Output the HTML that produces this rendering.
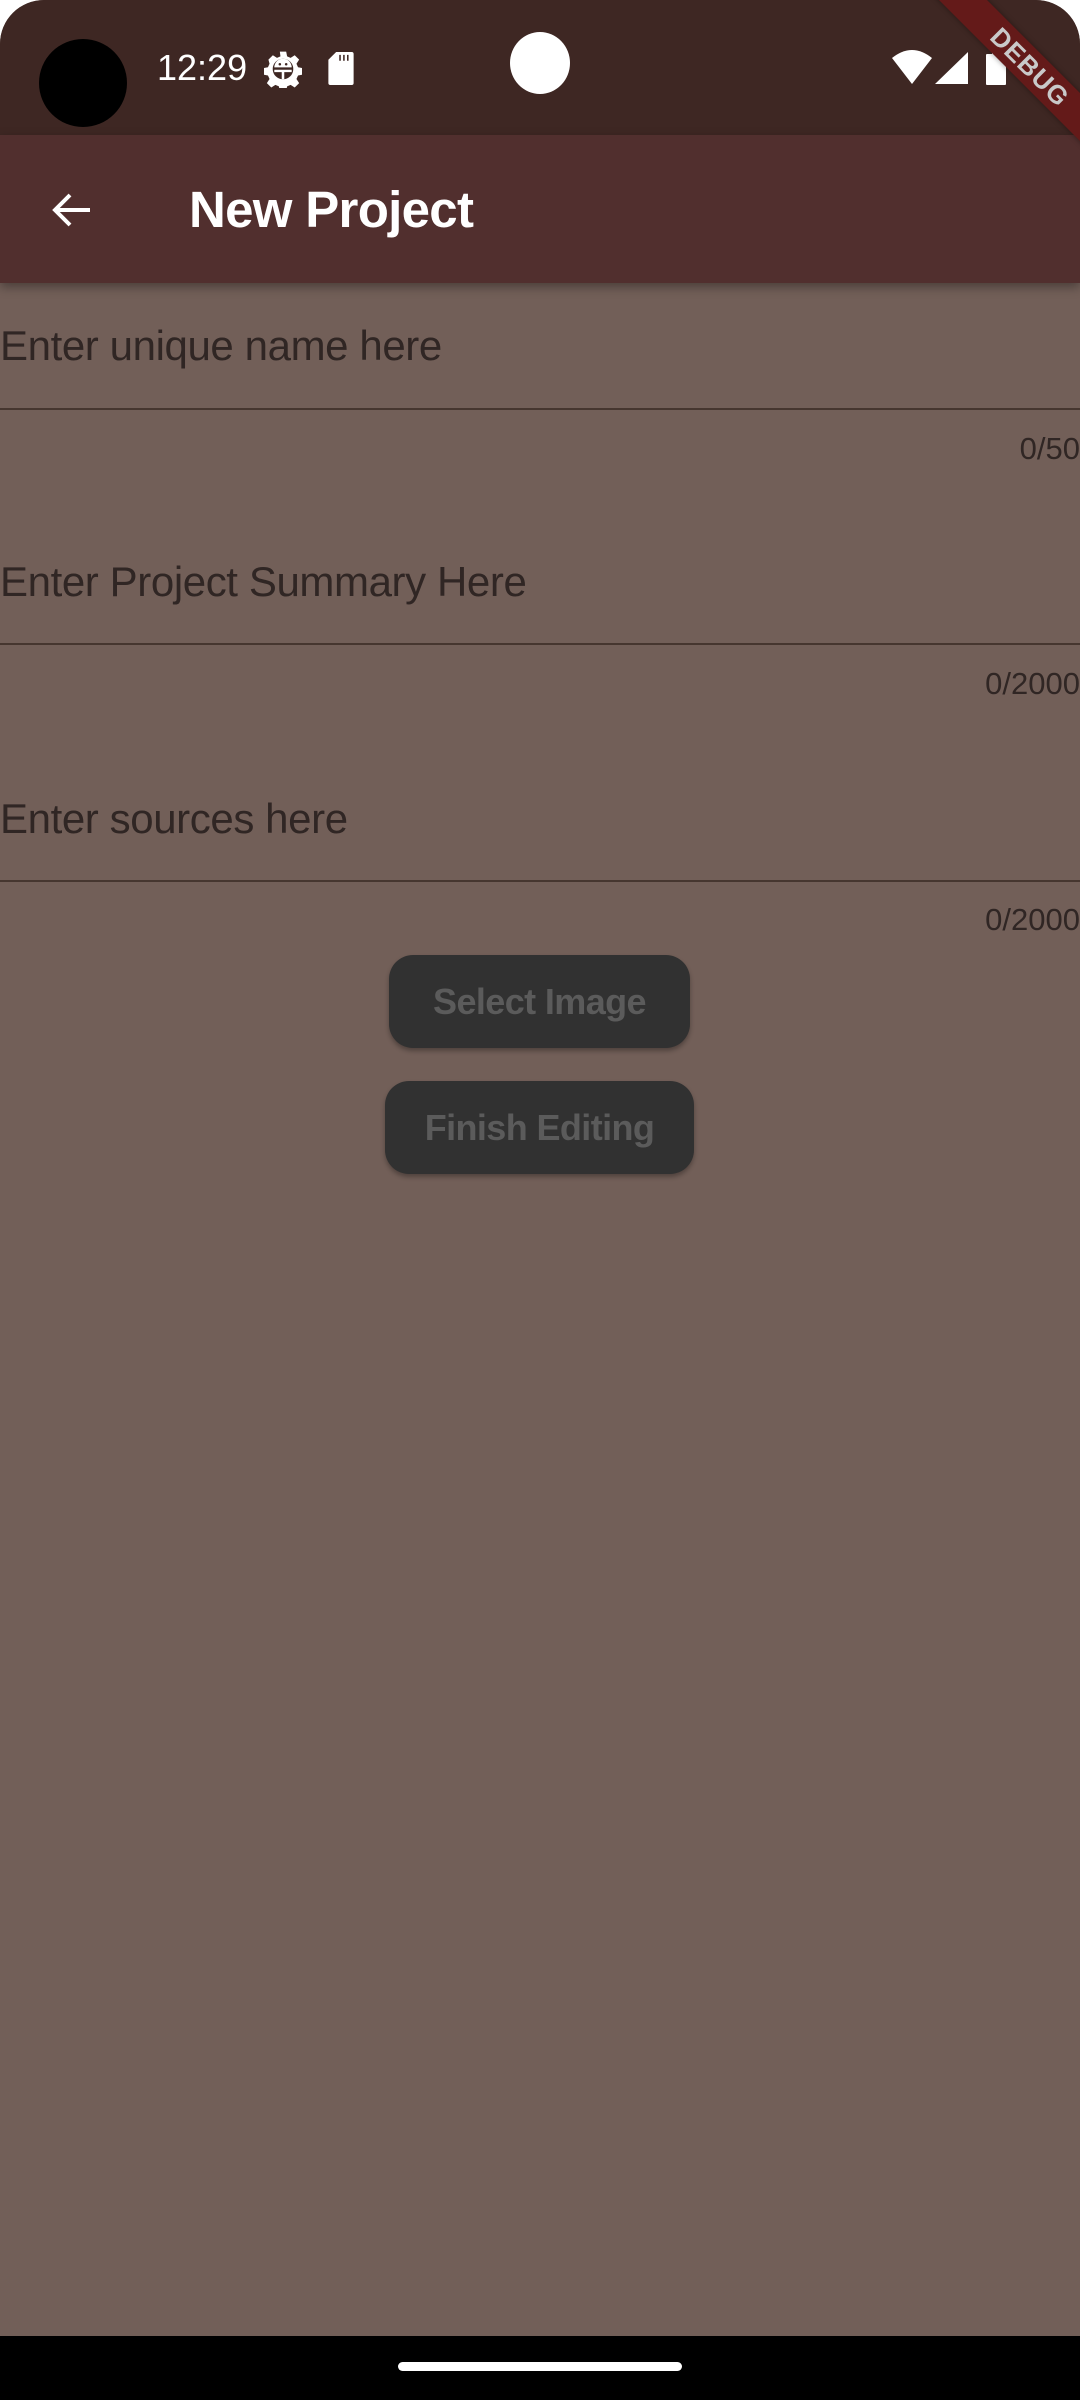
<!DOCTYPE html>
<html><head><meta charset="utf-8"><style>
html,body{margin:0;padding:0}
body{width:1080px;height:2400px;position:relative;overflow:hidden;background:#fff;font-family:"Liberation Sans",sans-serif}
.screen{position:absolute;left:0;top:0;width:1080px;height:2400px;border-radius:44px 44px 0 0;overflow:hidden;background:#725f58}
.status{position:absolute;left:0;top:0;width:1080px;height:135px;background:#3e2723}
.appbar{position:absolute;left:0;top:135px;width:1080px;height:148px;background:#512f2e;box-shadow:0 4px 10px rgba(0,0,0,.35)}
.t{position:absolute;white-space:nowrap}
.hint{font-size:42px;color:#302624;left:0;letter-spacing:-0.4px}
.line{position:absolute;left:0;width:1080px;height:2px;background:#46362f}
.cnt{font-size:31px;color:#302624;right:0}
.btn{position:absolute;background:#313131;border-radius:24px;color:#5b5b5b;font-weight:bold;font-size:36px;text-align:center;box-shadow:0 3px 5px rgba(0,0,0,.3);letter-spacing:-0.6px}
.nav{position:absolute;left:0;top:2336px;width:1080px;height:64px;background:#000}
</style></head><body>
<div class="screen">
<div class="status"></div>
<div style="position:absolute;left:39px;top:39px;width:88px;height:88px;border-radius:50%;background:#000"></div>
<div class="t" style="left:157px;top:47px;font-size:36px;color:#fff">12:29</div>
<svg style="position:absolute;left:264px;top:50px" width="38" height="38" viewBox="0 0 24 24"><path fill="#fff" d="M10 1h4l.6 3 2.2 1 2.6-1.7 2.8 2.8L20.5 8.7l1 2.2 3 .6v4l-3 .6-1 2.2 1.7 2.6-2.8 2.8-2.6-1.7-2.2 1-.6 3h-4l-.6-3-2.2-1-2.6 1.7-2.8-2.8 1.7-2.6-1-2.2-3-.6v-4l3-.6 1-2.2L2.8 6.1 5.6 3.3 8.2 5l2.2-1z"/><circle cx="12" cy="12" r="6.5" fill="#3e2723"/><path fill="#fff" d="M6.5 11a5.5 5.5 0 0 1 11 0zM6.5 12.5h11v1.5h-4.7v4.5h-1.6V14H6.5z"/><circle cx="10" cy="9" r=".8" fill="#3e2723"/><circle cx="14" cy="9" r=".8" fill="#3e2723"/></svg>
<svg style="position:absolute;left:328px;top:52px" width="26" height="33" viewBox="0 0 13 17"><path fill="#fff" d="M4 0h8a1 1 0 0 1 1 1v15a1 1 0 0 1-1 1H1a1 1 0 0 1-1-1V4z"/><path stroke="#3e2723" stroke-width=".8" d="M6 1.5v3M8 1.5v3M10 1.5v3"/></svg>
<div style="position:absolute;left:510px;top:32px;width:60px;height:62px;border-radius:50%;background:#fff"></div>
<svg style="position:absolute;left:892px;top:50px" width="40" height="34" viewBox="0 0 40 34"><path fill="#fff" d="M0 8Q20-8 40 8L20 34z"/></svg>
<svg style="position:absolute;left:935px;top:52px" width="33" height="32"><path fill="#fff" d="M33 0V32H0z"/></svg>
<svg style="position:absolute;left:986px;top:50px" width="20" height="35"><path fill="#fff" d="M6 0h8v4h5a1 1 0 0 1 1 1v29a1 1 0 0 1-1 1H1a1 1 0 0 1-1-1V5a1 1 0 0 1 1-1h5z"/></svg>
<div class="appbar"></div>
<svg style="position:absolute;left:48px;top:186px" width="48" height="48" viewBox="0 0 24 24"><path fill="none" stroke="#fff" stroke-width="2" d="M21 12H4M11 4.5L3.5 12 11 19.5"/></svg>
<div class="t" style="left:189px;top:180px;font-size:51px;color:#fff;font-weight:bold;letter-spacing:-0.7px">New Project</div>
<div style="position:absolute;left:880px;top:50px;width:300px;height:34px;background:#641a19;transform:rotate(45deg);color:#c9c9c9;font-weight:bold;font-size:26px;text-align:center;line-height:34px;letter-spacing:1px;box-shadow:0 0 6px rgba(0,0,0,.4)">DEBUG</div>

<div class="t hint" style="top:322px">Enter unique name here</div>
<div class="line" style="top:408px"></div>
<div class="t cnt" style="top:431px">0/50</div>
<div class="t hint" style="top:558px">Enter Project Summary Here</div>
<div class="line" style="top:643px"></div>
<div class="t cnt" style="top:666px">0/2000</div>
<div class="t hint" style="top:795px">Enter sources here</div>
<div class="line" style="top:880px"></div>
<div class="t cnt" style="top:902px">0/2000</div>

<div class="btn" style="left:389px;top:955px;width:301px;height:93px;line-height:93px">Select Image</div>
<div class="btn" style="left:385px;top:1081px;width:309px;height:93px;line-height:93px">Finish Editing</div>
<div class="nav"></div>
<div style="position:absolute;left:398px;top:2362px;width:284px;height:9px;border-radius:5px;background:#fff"></div>
</div>
</body></html>
